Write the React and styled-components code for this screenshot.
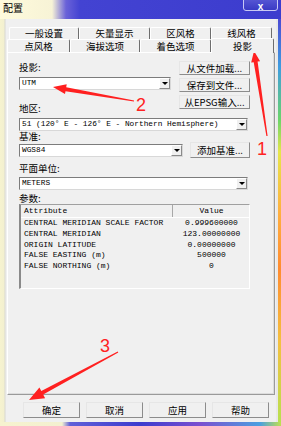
import React from 'react';
import styled, { createGlobalStyle } from 'styled-components';

const GlobalStyle = createGlobalStyle`
  html, body {
    margin: 0;
    padding: 0;
    overflow: hidden;
    background: #f0f0f0;
  }
`;

const cjk = `"Noto Sans CJK SC", "Noto Sans", sans-serif`;
const mono = `"Liberation Mono", "DejaVu Sans Mono", monospace`;

const Screen = styled.div`
  position: relative;
  width: 281px;
  height: 426px;
  display: flex;
  flex-direction: column;
  overflow: hidden;
  font-family: ${cjk};
  color: #000;
`;

const TitleBar = styled.div`
  height: 19px;
  flex: none;
  display: flex;
  align-items: flex-start;
  background: linear-gradient(to right, #fffbdc 0, #f7f3d6 52px, #6a62d8 66px, #4343d2 80px, #3c3cce 100%);
`;

const Title = styled.div`
  font-size: 10px;
  line-height: 16px;
  padding-left: 3px;
`;

const CloseButton = styled.div`
  margin-left: auto;
  margin-right: 3px;
  margin-top: -3px;
  width: 35px;
  height: 14px;
  border: 1px solid #c8c8f4;
  border-radius: 3px;
  background: linear-gradient(to bottom, #5a5ad6, #3a3ac4);
  color: #fff;
  font: bold 10px/16px "Liberation Sans", sans-serif;
  text-align: center;
  box-sizing: border-box;
  padding-top: 1px;
`;

const Middle = styled.div`
  flex: 1;
  display: flex;
  min-height: 0;
`;

const LeftFrame = styled.div`
  width: 6px;
  flex: none;
  background: linear-gradient(to right, #f6f3cf 0, #f3f0d0 4px, #d8d8d0 5px, #f0f0f0 6px);
`;

const RightFrame = styled.div`
  width: 5px;
  flex: none;
  background: linear-gradient(to bottom, #4b4bd4 0%, #3f9de0 12%, #6bd56a 25%, #e6e64a 33%, #ffb040 48%, #ff8c30 62%, #f4c040 80%, #b8e050 100%);
  box-shadow: inset 2px 0 0 #e8e8e8;
`;

const BottomFrame = styled.div`
  height: 4px;
  flex: none;
  background: linear-gradient(to right, #f6f3cf 0, #f3f0d0 62px, #6060d8 70px, #3c3cce 140px, #7a50d0 200px, #4aa0e0 260px, #c0e050 100%);
`;

const Content = styled.div`
  flex: 1;
  display: flex;
  flex-direction: column;
  padding-top: 8px;
  background: #f0f0f0;
`;

const TabRow = styled.div`
  display: flex;
  align-items: flex-end;
  height: ${p => p.$h}px;
  padding-left: ${p => p.$indent}px;
  position: relative;
  z-index: ${p => p.$front ? 2 : 1};
`;

const Tab = styled.div`
  width: ${p => p.$w}px;
  height: ${p => p.$active ? 15 : p.$h}px;
  flex: none;
  box-sizing: border-box;
  border-top: 1px solid #fff;
  border-left: 1px solid #fff;
  border-right: 1px solid #6e6e6e;
  border-radius: 2px 2px 0 0;
  background: #f0f0f0;
  font-size: 9.5px;
  line-height: ${p => p.$active ? 10 : p.$h - 3}px;
  padding-top: ${p => p.$active ? 2 : 1}px;
  text-align: center;
  margin-bottom: ${p => p.$active ? -1 : 0}px;
  position: relative;
  z-index: ${p => p.$active ? 3 : 1};
`;

const Panel = styled.div`
  margin: 0 1px;
  height: 343px;
  box-sizing: border-box;
  border: 1px solid;
  border-color: #fff #9a9a9a #9a9a9a #fff;
  box-shadow: inset -1px -1px 0 #dcdcdc;
  padding: 8px 0 0 11px;
  display: flex;
  flex-direction: column;
`;

const TopSection = styled.div`
  display: flex;
  gap: 8px;
`;

const LeftCol = styled.div`
  width: 152px;
  display: flex;
  flex-direction: column;
`;

const RightCol = styled.div`
  width: 71px;
  display: flex;
  flex-direction: column;
  gap: 3px;
`;

const Label = styled.div`
  font-size: 9.5px;
  line-height: 11px;
  height: 11px;
  margin-top: ${p => p.$mt || 0}px;
`;

const Combo = styled.div`
  width: ${p => p.$w}px;
  height: 13px;
  margin-top: ${p => p.$mt || 0}px;
  flex: none;
  box-sizing: border-box;
  border: 1px solid;
  border-color: #7c7c7c #d8d8d8 #d8d8d8 #7c7c7c;
  background: #fff;
  display: flex;
  align-items: center;
`;

const ComboText = styled.div`
  flex: 1;
  font-family: ${mono};
  font-size: 7.8px;
  line-height: 11px;
  padding-left: 2px;
  white-space: nowrap;
  overflow: hidden;
`;

const DropButton = styled.div`
  width: 11px;
  height: 11px;
  box-sizing: border-box;
  border: 1px solid;
  border-color: #fff #8a8a8a #8a8a8a #fff;
  background: #f0f0f0;
  display: flex;
  align-items: center;
  justify-content: center;
  &::after {
    content: '';
    border-left: 3px solid transparent;
    border-right: 3px solid transparent;
    border-top: 3px solid #000;
  }
`;

const Button = styled.div`
  width: ${p => p.$w ? `${p.$w}px` : 'auto'};
  height: ${p => p.$h || 14}px;
  box-sizing: border-box;
  border: 1px solid;
  border-color: #e6e6e6 #8c8c8c #8c8c8c #e6e6e6;
  background: #f0f0f0;
  font-size: 9.5px;
  line-height: ${p => (p.$h || 14) - 2}px;
  text-align: center;
  white-space: nowrap;
  flex: none;
`;

const DatumRow = styled.div`
  display: flex;
  align-items: center;
  gap: 7px;
  height: 16px;
`;

const TableBox = styled.div`
  width: 231px;
  height: 85px;
  box-sizing: border-box;
  border-style: solid;
  border-width: 1px 1px 1px 2px;
  border-color: #a0a0a0 #fff #fff #8a8a8a;
  overflow: hidden;
`;

const Grid = styled.table`
  width: 228px;
  table-layout: fixed;
  border-collapse: collapse;
  font-family: ${mono};
  font-size: 8px;
`;

const Th = styled.th`
  width: ${p => p.$w}px;
  height: 12px;
  padding: 0 0 0 ${p => p.$center ? 0 : 3}px;
  font-weight: normal;
  line-height: 12px;
  text-align: ${p => p.$center ? 'center' : 'left'};
  border-bottom: 1px solid #fff;
  border-right: 1px solid ${p => p.$center ? '#fff' : '#a8a8a8'};
  white-space: nowrap;
  overflow: hidden;
`;

const Td = styled.td`
  padding: 0 0 0 ${p => p.$center ? 0 : 3}px;
  height: 10.8px;
  line-height: 10.8px;
  text-align: ${p => p.$center ? 'center' : 'left'};
  white-space: nowrap;
  overflow: hidden;
`;

const ButtonRow = styled.div`
  display: grid;
  grid-template-columns: repeat(4, 57px);
  gap: 6px;
  padding-left: 17px;
  margin-top: 7px;
`;

const Overlay = styled.svg`
  position: absolute;
  left: 0;
  top: 0;
  pointer-events: none;
`;

const Num = styled.text`
  font-family: "Liberation Sans", sans-serif;
  font-size: 18px;
  fill: #ff2222;
`;

function arrowPoints(x1, y1, x2, y2, head, headW) {
  const L = Math.hypot(x2 - x1, y2 - y1);
  const ux = (x2 - x1) / L, uy = (y2 - y1) / L;
  const nx = -uy, ny = ux;
  const bx = x2 - ux * head, by = y2 - uy * head;
  const pts = [
    [x1 + nx * 0.6, y1 + ny * 0.6],
    [bx + nx * 2, by + ny * 2],
    [bx + nx * headW, by + ny * headW],
    [x2, y2],
    [bx - nx * headW, by - ny * headW],
    [bx - nx * 2, by - ny * 2],
    [x1 - nx * 0.6, y1 - ny * 0.6],
  ];
  return pts.map(p => p.map(v => v.toFixed(1)).join(',')).join(' ');
}

const rows = [
  ['CENTRAL MERIDIAN SCALE FACTOR', '0.999600000'],
  ['CENTRAL MERIDIAN', '123.00000000'],
  ['ORIGIN LATITUDE', '0.00000000'],
  ['FALSE EASTING (m)', '500000'],
  ['FALSE NORTHING (m)', '0'],
];

export default function App() {
  return (
    <Screen>
      <GlobalStyle />
      <TitleBar>
        <Title>配置</Title>
        <CloseButton>x</CloseButton>
      </TitleBar>
      <Middle>
        <LeftFrame />
        <Content>
          <TabRow $indent={3} $h={12}>
            <Tab $w={70} $h={12}>一般设置</Tab>
            <Tab $w={71} $h={12}>矢量显示</Tab>
            <Tab $w={61} $h={12}>区风格</Tab>
            <Tab $w={61} $h={12}>线风格</Tab>
          </TabRow>
          <TabRow $indent={1} $h={13} $front>
            <Tab $w={63} $h={13}>点风格</Tab>
            <Tab $w={70} $h={13}>海拔选项</Tab>
            <Tab $w={71} $h={13}>着色选项</Tab>
            <Tab $w={63} $active>投影</Tab>
          </TabRow>
          <Panel>
            <TopSection>
              <LeftCol>
                <Label $mt={1}>投影:</Label>
                <Combo $w={152} $mt={4}>
                  <ComboText>UTM</ComboText>
                  <DropButton />
                </Combo>
                <Label $mt={13}>地区:</Label>
              </LeftCol>
              <RightCol>
                <Button>从文件加载...</Button>
                <Button>保存到文件...</Button>
                <Button>从EPSG输入...</Button>
              </RightCol>
            </TopSection>
            <Combo $w={229} $mt={4}>
              <ComboText>51 (120° E - 126° E - Northern Hemisphere)</ComboText>
              <DropButton />
            </Combo>
            <Label>基准:</Label>
            <DatumRow>
              <Combo $w={164}>
                <ComboText>WGS84</ComboText>
                <DropButton />
              </Combo>
              <Button $w={60} $h={16}>添加基准...</Button>
            </DatumRow>
            <Label $mt={5}>平面单位:</Label>
            <Combo $w={229} $mt={3}>
              <ComboText>METERS</ComboText>
              <DropButton />
            </Combo>
            <Label $mt={3}>参数:</Label>
            <TableBox>
              <Grid>
                <thead>
                  <tr>
                    <Th $w={148}>Attribute</Th>
                    <Th $w={77} $center>Value</Th>
                  </tr>
                </thead>
                <tbody>
                  {rows.map(([a, v]) => (
                    <tr key={a}>
                      <Td>{a}</Td>
                      <Td $center>{v}</Td>
                    </tr>
                  ))}
                </tbody>
              </Grid>
            </TableBox>
          </Panel>
          <ButtonRow>
            <Button $h={16}>确定</Button>
            <Button $h={16}>取消</Button>
            <Button $h={16}>应用</Button>
            <Button $h={16}>帮助</Button>
          </ButtonRow>
        </Content>
        <RightFrame />
      </Middle>
      <BottomFrame />

      {/* red annotations */}
      <Overlay width="281" height="426" viewBox="0 0 281 426">
        <polygon points={arrowPoints(267, 136, 254, 51, 11, 4.5)} fill="#ff2020" />
        <polygon points={arrowPoints(134, 101, 53, 87, 13, 5)} fill="#ff2020" />
        <polygon points={arrowPoints(118, 352, 29, 400, 15, 6)} fill="#ff2020" />
        <Num x="257" y="155">1</Num>
        <Num x="136" y="111">2</Num>
        <Num x="100" y="352">3</Num>
      </Overlay>
    </Screen>
  );
}
